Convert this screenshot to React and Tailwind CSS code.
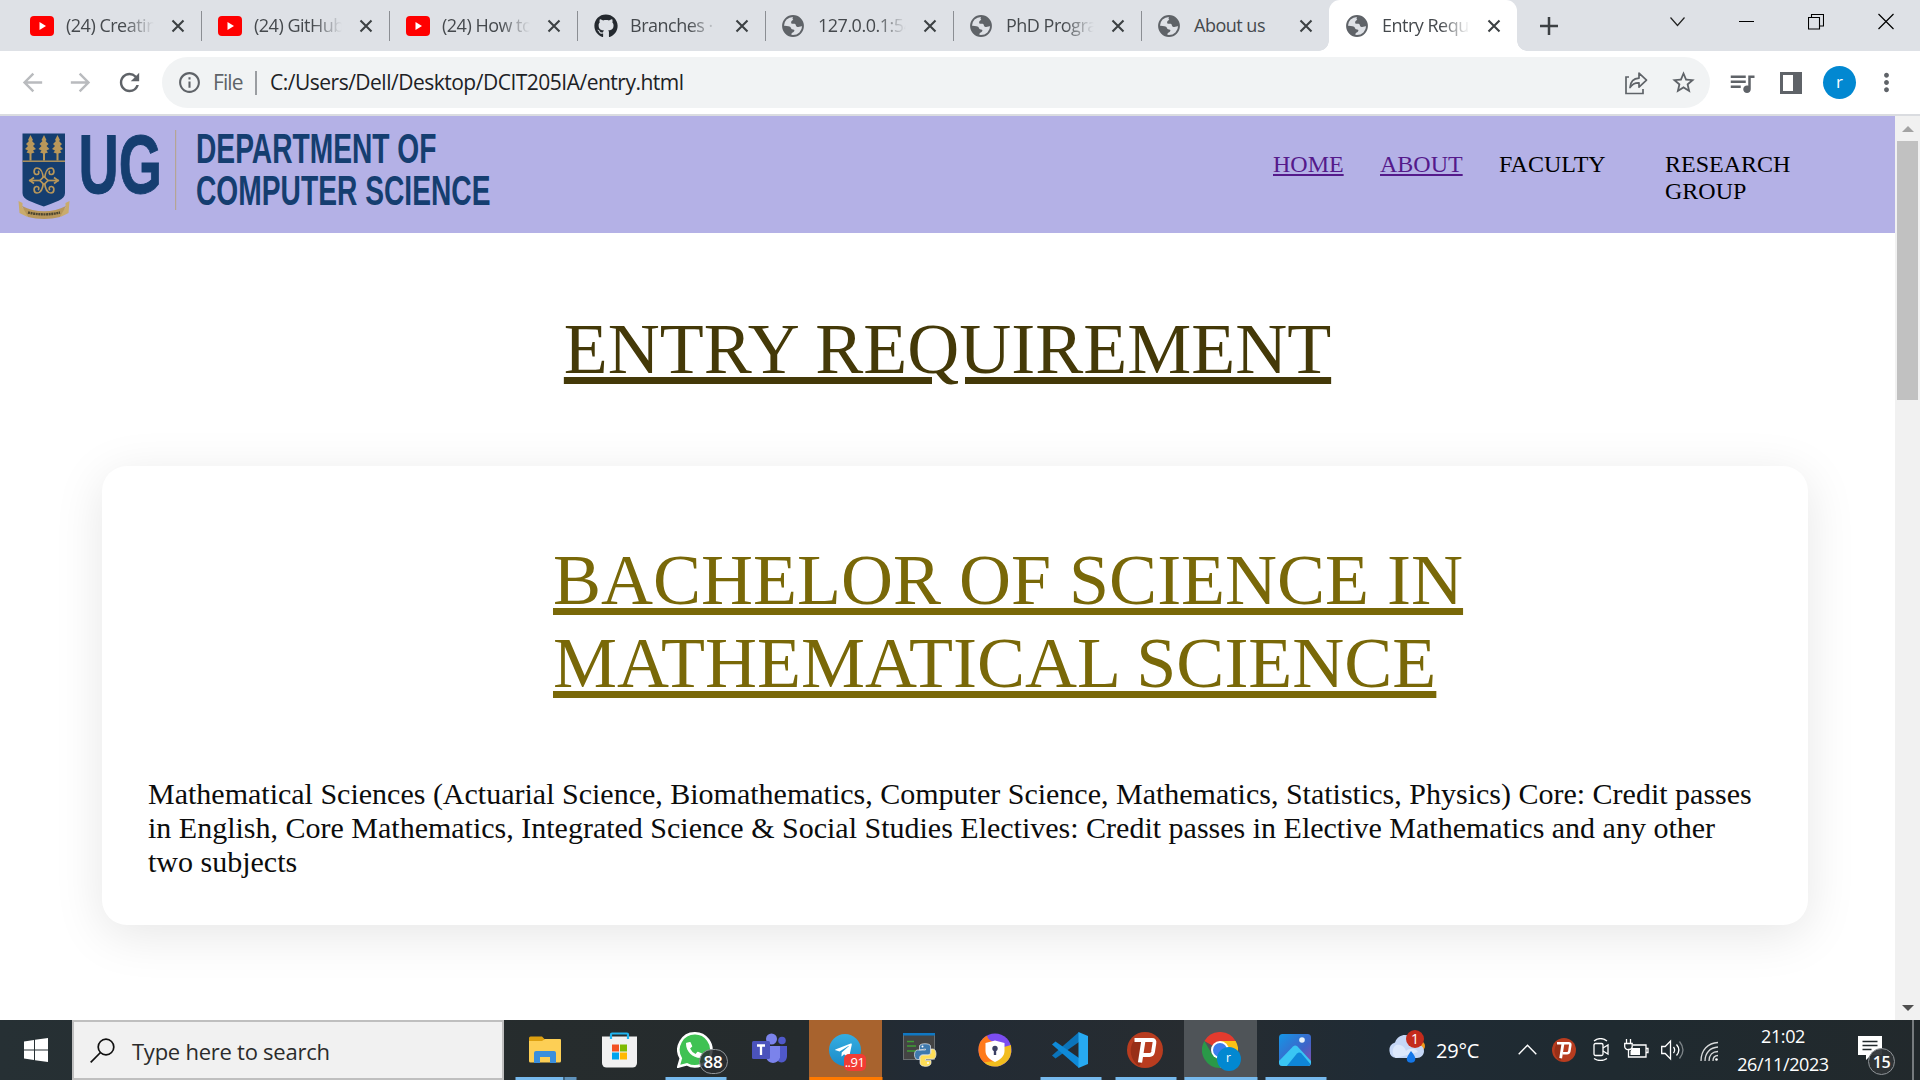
import React from "react";
import { FaGithub, FaPhoneAlt, FaTelegramPlane } from "react-icons/fa";
import {
  MdArrowBack,
  MdArrowForward,
  MdInfoOutline,
  MdMoreVert,
  MdQueueMusic,
  MdRefresh,
  MdStarBorder,
} from "react-icons/md";

const YouTubeIcon = () => (
  <svg width="24" height="20" viewBox="0 0 24 20">
    <rect width="24" height="20" rx="4" fill="#f00" />
    <path d="M9.5 6v8l6.500-4z" fill="#fff" />
  </svg>
);

const GlobeIcon = () => (
  <svg width="22" height="26" viewBox="0 0 22 22">
    <circle cx="11" cy="11" r="10" fill="#dee1e6" stroke="#5f6368" strokeWidth="1.8" />
    <path
      d="M11.5 1.2c-1.5 1.6-1 3-.2 3.6-1.8.8-2.6 2-2 3.6 1.2.7 2.6.3 3.8.5 1 .6.6 2.2 1.8 2.8 1.9.7 4-.6 6-.7A10 10 0 0 0 11.5 1.2z"
      fill="#5f6368"
    />
    <path
      d="M1 10.5c2.3.4 5.200.2 7.100 1.300 1.200.8.700 2.100 1.900 2.500 1.600.4 2.800.3 2.300 1.600-.8 1.500-2.500 1.400-2.900 3.100-.1.800-.1 1.500 0 2.200A10 10 0 0 1 1 10.500z"
      fill="#5f6368"
    />
  </svg>
);

const CloseX = () => (
  <svg width="14" height="14" viewBox="0 0 14 14" className="shrink-0">
    <path d="M1.500 1.500l11 11M12.500 1.500l-11 11" stroke="#3c4043" strokeWidth="2.100" />
  </svg>
);

const tabs = [
  { title: "(24) Creatin", icon: "yt" },
  { title: "(24) GitHub", icon: "yt" },
  { title: "(24) How to", icon: "yt" },
  { title: "Branches ·", icon: "gh" },
  { title: "127.0.0.1:54", icon: "globe" },
  { title: "PhD Progra", icon: "globe" },
  { title: "About us", icon: "globe", whole: true },
  { title: "Entry Requ", icon: "globe", active: true },
];

function Tab({ tab, last }) {
  return (
    <div
      className={
        "relative flex h-[51px] w-[188px] shrink-0 items-center pl-[17px] " +
        (tab.active ? "rounded-t-[11px] bg-white" : "")
      }
    >
      <span className="flex w-[24px] shrink-0 justify-start">
        {tab.icon === "yt" && <YouTubeIcon />}
        {tab.icon === "gh" && <FaGithub size={24} color="#24292f" />}
        {tab.icon === "globe" && <GlobeIcon />}
      </span>
      <span
        className={
          "-mt-[1px] ml-[12px] w-[88px] shrink-0 text-[18px] leading-[24px] tracking-[-0.500px] whitespace-nowrap text-[#45494d] " +
          (tab.whole ? "" : "[mask-image:linear-gradient(to_right,black_66%,transparent_100%)]")
        }
      >
        {tab.title}
      </span>
      <span className="ml-[17px] flex">
        <CloseX />
      </span>
      {!last && !tab.active && (
        <span className="absolute top-[11px] -right-[1px] h-[30px] w-[1.500px] bg-[#8b8e93]" />
      )}
      {tab.active && (
        <>
          <span className="absolute bottom-0 -left-[10px] size-[10px] bg-[radial-gradient(circle_at_0_0,#dee1e6_9.500px,#fff_10px)]" />
          <span className="absolute -right-[10px] bottom-0 size-[10px] bg-[radial-gradient(circle_at_100%_0,#dee1e6_9.500px,#fff_10px)]" />
        </>
      )}
    </div>
  );
}

function TabStrip() {
  return (
    <div className="flex h-[51px] bg-[#dee1e6] pl-[13px]">
      {tabs.map((t, i) => (
        <Tab key={t.title} tab={t} last={i === 6} />
      ))}
      <svg width="18" height="18" viewBox="0 0 18 18" className="mt-[17px] ml-[23px]">
        <path d="M9 0v18M0 9h18" stroke="#3c4043" strokeWidth="2.500" />
      </svg>
      <div className="mt-[13px] mr-[26px] ml-auto flex gap-[54px]">
        <svg width="15" height="17" viewBox="0 0 15 17">
          <path d="M.5 4.500l7 8 7-8" fill="none" stroke="#222" strokeWidth="1.200" />
        </svg>
        <svg width="15" height="17" viewBox="0 0 15 17">
          <path d="M0 8.500h15" stroke="#000" />
        </svg>
        <svg width="16" height="17" viewBox="0 0 16 17">
          <path d="M.5 4.500h11v11.500H.5zM3.500 4.500v-3h12v11.500h-4" fill="none" stroke="#000" strokeWidth="1.100" />
        </svg>
        <svg width="16" height="17" viewBox="0 0 16 17">
          <path d="M.5 1l15 15M15.500 1l-15 15" stroke="#000" strokeWidth="1.200" />
        </svg>
      </div>
    </div>
  );
}

function Toolbar() {
  return (
    <div className="flex h-[65px] items-center border-b-2 border-[#dadce0] bg-white">
      <MdArrowBack size={29} color="#b9bbbe" className="ml-[18px]" />
      <MdArrowForward size={29} color="#b9bbbe" className="ml-[19px]" />
      <MdRefresh size={29} color="#5f6368" className="ml-[20px]" />
      <div className="ml-[18px] flex h-[51px] w-[1548px] items-center rounded-full bg-[#f1f3f4] pl-[15px] text-[21px]">
        <MdInfoOutline size={25} color="#5f6368" />
        <span className="ml-[11px] w-[32px] tracking-[-0.900px] text-[#5f6368]">File</span>
        <span className="ml-[10px] h-[24px] w-[2px] bg-[#9a9da1]" />
        <span className="ml-[13px] tracking-[-0.500px] whitespace-nowrap text-[#202124]">
          C:/Users/Dell/Desktop/DCIT205IA/entry.html
        </span>
        <svg width="23" height="25" viewBox="0 0 23 25" className="ml-auto">
          <path d="M4 7H1v16.500h17V19" fill="none" stroke="#5f6368" strokeWidth="1.700" />
          <path
            d="M5 17.500c.5-6 4-9 9-9.300V3.200l7.500 7-7.500 7v-4.400c-4-.2-6.800 1.200-9 4.700z"
            fill="none"
            stroke="#5f6368"
            strokeWidth="1.700"
            strokeLinejoin="round"
          />
        </svg>
        <MdStarBorder size={27} color="#5f6368" className="mr-[13px] ml-[22px]" />
      </div>
      <MdQueueMusic size={30} color="#5f6368" className="ml-[17px]" />
      <svg width="22" height="22" viewBox="0 0 22 22" className="ml-[23px]">
        <path d="M0 0h22v22H0zM3 3v16h10V3z" fill="#5f6368" fillRule="evenodd" />
      </svg>
      <span className="ml-[21px] flex size-[33px] items-center justify-center rounded-full bg-[#0288d1] pb-[2px] text-[17px] text-white">
        r
      </span>
      <MdMoreVert size={29} color="#5f6368" className="ml-[16px]" />
    </div>
  );
}

function Logo() {
  return (
    <svg width="500" height="117" viewBox="0 116 500 117" className="shrink-0" fontFamily="Liberation Sans, Arial, sans-serif" fontWeight="bold">
      <path d="M22.500 133.500H65V193c0 7-10 9-21.200 13.500C32.500 202 22.500 200 22.500 193z" fill="#153e70" />
      <g fill="#b8975a">
        {[30.500, 44, 57.500].map((x) => (
          <path
            key={x}
            d={`M${x} 135l2.500 5-1 1 3 3-2 2 3 3-3 1.500 1.500 2-3 1v7h-2v-7l-3-1 1.500-2-3-1.500 3-3-2-2 3-3-1-1z`}
          />
        ))}
        <rect x="22.500" y="160.500" width="42.500" height="1.400" />
      </g>
      <g fill="none" stroke="#b8975a" strokeWidth="1.700">
        <path d="M29 180.500h30" />
        <path d="M43.500 180c-.5-8-3-12-6.500-12s-4 6-.5 6.500c2.500.2 3-2.500 1.500-3.500M44.500 180c.5-8 3-12 6.500-12s4 6 .5 6.500c-2.500.2-3-2.500-1.500-3.500M43.500 181c-.5 8-3 12-6.500 12s-4-6-.5-6.500c2.500-.2 3 2.500 1.500 3.500M44.500 181c.5 8 3 12 6.500 12s4-6 .5-6.500c-2.500-.2-3 2.500-1.500 3.500" />
        <path d="M34 177.500l-4 3 4 3M54 177.500l4 3-4 3" />
        <path d="M44 176.500l4 4-4 4-4-4z" fill="#153e70" />
      </g>
      <path d="M18.500 201l4 2v5l5 3v6l-8-4zM69.500 201l-4 2v5l-5 3v6l8-4z" fill="#c9ab6c" />
      <path d="M22 206c13 7 31 7 44 0l-6 11c-10 2.500-22 2.500-32 0z" fill="#b8975a" />
      <path d="M28 212.500c11 2.500 21 2.500 32 0" fill="none" stroke="#4d4630" strokeWidth="2.400" strokeDasharray="2 .6" />
      <text x="78.500" y="192.500" fontSize="84" textLength="83.500" lengthAdjust="spacingAndGlyphs" fill="#153e70" stroke="#153e70" strokeWidth="1">UG</text>
      <rect x="175" y="130" width="1.200" height="80" fill="#b5a594" />
      <text x="196" y="163" fontSize="42" textLength="240.500" lengthAdjust="spacingAndGlyphs" fill="#153e70">DEPARTMENT OF</text>
      <text x="196" y="205" fontSize="42" textLength="294.500" lengthAdjust="spacingAndGlyphs" fill="#153e70">COMPUTER SCIENCE</text>
    </svg>
  );
}

function Page() {
  return (
    <div className="flex h-[904px] font-['Liberation_Serif','Times_New_Roman',serif]">
      <div className="w-[1895px] overflow-hidden bg-white">
        <header className="flex h-[117px] bg-[#b4b1e6] text-[24px] leading-[27px] text-black">
          <Logo />
          <nav className="mt-[35px] ml-[773px] flex">
            <a className="w-[107px] text-[#551a8b] underline decoration-2 underline-offset-[2px]">HOME</a>
            <a className="w-[119px] text-[#551a8b] underline decoration-2 underline-offset-[2px]">ABOUT</a>
            <span className="w-[166px]">FACULTY</span>
            <span className="w-[130px]">RESEARCH GROUP</span>
          </nav>
        </header>
        <h1 className="mt-[75px] text-center text-[72px] leading-[83px] text-[#443908] underline decoration-[7px] underline-offset-[4px]">
          ENTRY REQUIREMENT
        </h1>
        <section className="mt-[75px] ml-[102px] h-[459px] w-[1706px] rounded-[25px] bg-white px-[46px] shadow-[0_10px_50px_rgba(0,0,0,0.100)]">
          <h2 className="ml-[405px] w-[960px] pt-[73px] text-[72px] leading-[83px] text-[#796808] underline decoration-[7px] underline-offset-[4px]">
            BACHELOR OF SCIENCE IN MATHEMATICAL SCIENCE
          </h2>
          <p className="mt-[72px] w-[1615px] text-[30px] leading-[34px] text-[#0c0c0c]">
            Mathematical Sciences (Actuarial Science, Biomathematics, Computer Science, Mathematics, Statistics,
            Physics) Core: Credit passes in English, Core Mathematics, Integrated Science &amp; Social Studies
            Electives: Credit passes in Elective Mathematics and any other two subjects
          </p>
        </section>
      </div>
      <div className="flex w-[25px] flex-col items-center bg-[#f1f1f1]">
        <svg width="12" height="25" viewBox="0 0 12 25">
          <path d="M0 16L6 10l6 6z" fill="#a3a3a3" />
        </svg>
        <div className="h-[259px] w-[21px] bg-[#c1c1c1]" />
        <svg width="12" height="25" viewBox="0 0 12 25" className="mt-auto">
          <path d="M0 10l6 6 6-6z" fill="#505050" />
        </svg>
      </div>
    </div>
  );
}

const Explorer = () => (
  <svg width="32" height="28" viewBox="0 0 32 28">
    <path d="M0 2a1.500 1.500 0 0 1 1.500-1.500H13L16 3.500V8H0z" fill="#dda010" />
    <path d="M0 5h13l3-2h15a1 1 0 0 1 1 1v21a1.500 1.500 0 0 1-1.500 1.500h-29A1.500 1.500 0 0 1 0 25z" fill="#fdcf55" />
    <path d="M5 27V17a2 2 0 0 1 2-2h18a2 2 0 0 1 2 2v10h-6v-6H11v6z" fill="#3b8fdc" />
  </svg>
);

const Store = () => (
  <svg width="35" height="36" viewBox="0 0 35 36">
    <path d="M0 4.500h35V31a4.500 4.500 0 0 1-4.500 4.500h-26A4.500 4.500 0 0 1 0 31z" fill="#f1f1f1" />
    <path d="M9 7V2.500a1 1 0 0 1 1-1h15a1 1 0 0 1 1 1V7" fill="none" stroke="#20b4ef" strokeWidth="2.200" />
    <path d="M10 12.500h7v7h-7z" fill="#f25022" />
    <path d="M18 12.500h7v7h-7z" fill="#7fba00" />
    <path d="M10 20.500h7v7h-7z" fill="#00a4ef" />
    <path d="M18 20.500h7v7h-7z" fill="#ffb900" />
  </svg>
);

const WhatsApp = () => (
  <span className="relative flex">
    <svg width="36" height="36" viewBox="0 0 36 36">
      <path d="M18.200 1.300a16.500 16.500 0 1 1-8.200 31L1.400 34.600l2.400-8.300A16.500 16.500 0 0 1 18.200 1.300z" fill="#3fc253" stroke="#fff" strokeWidth="2.600" />
    </svg>
    <FaPhoneAlt size={16} color="#fff" className="absolute top-[10px] left-[9px]" />
    <span className="absolute top-[17px] left-[22px] flex h-[25px] w-[29px] items-center justify-center rounded-full border border-[#8f9498] bg-[#2a2e31]/85 text-[17px] leading-none font-semibold tracking-[-0.300px] text-white">
      88
    </span>
  </span>
);

const Teams = () => (
  <svg width="36" height="34" viewBox="0 0 36 34">
    <circle cx="19.500" cy="6" r="5.500" fill="#7b83eb" />
    <circle cx="30" cy="7.500" r="3.800" fill="#5059c9" />
    <path d="M24 13h11v9.500c0 4-2 7-5.500 7S24 26 24 23z" fill="#5059c9" />
    <path d="M14 13h14v11.500a7.500 8.500 0 0 1-14 0z" fill="#7b83eb" />
    <rect y="8" width="18" height="18" rx="1.500" fill="#4b53bc" />
    <path d="M5 12.500h8M9 12.500v9.500" stroke="#fff" strokeWidth="2.300" />
  </svg>
);

const Telegram = () => (
  <span className="relative flex size-[32px] items-center justify-center rounded-full bg-gradient-to-b from-[#35aee2] to-[#1b8bc8]">
    <FaTelegramPlane size={19} color="#fff" className="mr-[3px]" />
    <span className="absolute top-[20px] left-[15px] flex h-[17px] w-[22px] items-center justify-center rounded-[5px] bg-[#f23c34] text-[13px] leading-none tracking-[-0.500px] text-white">
      ..91
    </span>
  </span>
);

const Python = () => (
  <svg width="34" height="34" viewBox="0 0 34 34">
    <rect width="32" height="27" fill="#6a6f72" />
    <rect x="1" y="2" width="30" height="24" fill="#444" />
    <rect width="32" height="2.500" fill="#0f78c4" />
    <path d="M4 8.500h7M4 13h9M4 18h9" stroke="#3f9c35" strokeWidth="1.300" />
    <g stroke="#e9edf0" strokeWidth=".7">
      <path d="M16.500 17v-4c0-3 11-3 11 0v6c0 2-1 3-3 3h-5c-2 0-3 1-3 3v1.500h-2c-4 0-4-9.500 0-9.500h8v-1z" fill="#3f79ad" />
      <path d="M28 16h2c4 0 4 10 0 10h-7.500v1.500H28V30c0 4.500-11 4.500-11 0v-4.500c0-2 1-3.500 3-3.500h5c2 0 3-1 3-3z" fill="#ffde57" />
    </g>
    <circle cx="19.500" cy="13.500" r="1" fill="#fff" />
    <circle cx="25" cy="30" r="1" fill="#fff" />
  </svg>
);

const SecureBrowser = () => (
  <svg width="34" height="34" viewBox="0 0 34 34">
    <circle cx="17" cy="17" r="16.500" fill="#7c4df0" />
    <path d="M9 2.500A16.500 16.500 0 0 0 10 32l7-3 1-20C14 9 10 7 9 2.500z" fill="#ff7a1a" />
    <path d="M6 29.300A16.500 16.500 0 0 0 33.300 19L33 12l-7 2-9 14z" fill="#f2bd1d" />
    <path d="M7.500 10L17 7.500l9.500 2.500v8c0 5-4 8.500-9.500 11-5.500-2.500-9.500-6-9.500-11z" fill="#fff" />
    <circle cx="17" cy="15.500" r="2.700" fill="#3a3f63" />
    <path d="M15.800 16h2.400v6h-2.400z" fill="#3a3f63" />
  </svg>
);

const VsCode = () => (
  <svg width="36" height="36" viewBox="0 0 36 36">
    <path d="M0 23.500l3.500 3L27 10V0z" fill="#0b74ba" />
    <path d="M0 12.500l3.500-3L27 26v10z" fill="#0f8ad8" />
    <path d="M26.500 0L36 4v28l-9.500 4z" fill="#27a9f1" />
  </svg>
);

const PIcon = ({ size = 36 }) => (
  <svg width={size} height={size} viewBox="0 0 36 36">
    <circle cx="18" cy="18" r="18" fill="#b83c1f" />
    <path d="M15 30V9L7 8.500A18 18 0 0 0 12 34z" fill="#982f17" />
    <path d="M7.500 8H25c2 0 2.800 1 2.400 3l-1.400 9c-.4 2-1.400 3-3.400 3H16" fill="none" stroke="#fff" strokeWidth="3.800" />
    <path d="M16.500 8l-3.500 22.500" stroke="#fff" strokeWidth="4.200" />
  </svg>
);

const Chrome = () => (
  <span className="relative flex">
    <svg width="36" height="36" viewBox="0 0 36 36">
      <path d="M18 18L2.400 9A18 18 0 0 1 33.600 9z" fill="#e33b2e" />
      <path d="M18 9h15.600A18 18 0 0 1 18 36l8-14z" fill="#fbc116" />
      <path d="M2.400 9A18 18 0 0 0 18 36l8-13.500-15.800 0z" fill="#2a9948" />
      <circle cx="18" cy="18" r="9" fill="#fff" />
      <circle cx="18" cy="18" r="7" fill="#3b7ded" />
    </svg>
    <span className="absolute top-[15px] left-[15px] flex size-[24px] items-center justify-center rounded-full bg-[#0288d1] pb-[2px] text-[12px] text-white">
      r
    </span>
  </span>
);

const Photos = () => (
  <svg width="32" height="32" viewBox="0 0 32 32">
    <defs>
      <linearGradient id="ph" x1="0" y1="0" x2="1" y2="1">
        <stop offset="0" stopColor="#1496e6" />
        <stop offset=".6" stopColor="#3f64c8" />
        <stop offset="1" stopColor="#8a4cae" />
      </linearGradient>
      <clipPath id="pc"><rect width="32" height="32" rx="3.500" /></clipPath>
    </defs>
    <g clipPath="url(#pc)">
      <rect width="32" height="32" fill="url(#ph)" />
      <path d="M0 27l14-14.500c1.500-1.400 3-1.400 4.500 0L32 27v6H0z" fill="#3ac6f4" />
      <path d="M7 33l11-13.500c1.500-1.500 3-1.500 4.500 0L34 33z" fill="#0f86d8" />
    </g>
    <circle cx="23" cy="6" r="2.800" fill="#e8f2fb" />
  </svg>
);

const apps = [
  { id: "explorer", Icon: Explorer, bar: "group" },
  { id: "store", Icon: Store },
  { id: "whatsapp", Icon: WhatsApp, bar: "short" },
  { id: "teams", Icon: Teams },
  { id: "telegram", Icon: Telegram, cell: "bg-[#a8632e]", bar: "orange" },
  { id: "python", Icon: Python },
  { id: "browser", Icon: SecureBrowser },
  { id: "code", Icon: VsCode, bar: "short" },
  { id: "p", Icon: PIcon, bar: "short" },
  { id: "chrome", Icon: Chrome, cell: "bg-[#4f5458]", bar: "full" },
  { id: "photos", Icon: Photos, bar: "short" },
];

const bars = {
  group: "w-[61px] bg-[linear-gradient(to_right,#76b9ed_47px,#41647f_47px,#41647f_49px,#5f92bb_49px)]",
  short: "w-[61px] bg-[#76b9ed]",
  full: "w-[73px] bg-[#76b9ed]",
  orange: "w-[73px] bg-[#ff7a00]",
};

function Tray() {
  return (
    <div className="ml-[56px] flex h-[60px] items-center text-white">
      <span className="relative mt-[2px] flex">
        <svg width="38" height="34" viewBox="0 0 38 34">
          <circle cx="32" cy="12" r="5" fill="#f29a1c" />
          <path d="M8 24a8 8 0 0 1-1-15.500C9 3 13 1 17 1c6 0 10 4 10.500 9 5 0 8.500 3 8.500 7s-3 7-7 7z" fill="#c5d7f6" />
          <path d="M8 24a8 8 0 0 1 0-13c5-1 9 2 10 6 3-3 10-3 12 1" fill="#dce8fb" />
          <path d="M23 17c4 5 5 7 4 9.500-1 3-7 3-8 0-.8-2.500 1-5 4-9.500z" fill="#1477e8" />
        </svg>
        <span className="absolute -top-[4px] left-[18px] flex size-[18px] items-center justify-center rounded-full bg-[#c42b1c] text-[14px] leading-none">
          1
        </span>
      </span>
      <span className="mt-[2px] ml-[10px] w-[45px] text-[20px] tracking-[-0.200px] whitespace-nowrap">29°C</span>
      <svg width="19" height="11" viewBox="0 0 19 11" className="-mt-[2px] ml-[37px]">
        <path d="M.7 10.300L9.500 1.200l8.800 9.100" fill="none" stroke="#fff" strokeWidth="1.400" />
      </svg>
      <span className="-mt-[1px] ml-[15px]"><PIcon size={24} /></span>
      <svg width="16" height="23" viewBox="0 0 16 23" className="-mt-[1px] ml-[17px]" fill="none" stroke="#fff" strokeWidth="1.300">
        <rect x="1" y="5.500" width="9" height="12" rx="1.500" />
        <path d="M10 10l5-3v9l-5-3M1 3c4-3 9-3 13 0M1 20.500c4 2.500 9 2.500 13 0" />
      </svg>
      <svg width="25" height="20" viewBox="0 -1 25 20" className="-mt-[2px] ml-[15px]" fill="none" stroke="#fff" strokeWidth="1.300">
        <path d="M2.500-1v4M6.500-1v4M.7 3.500h7.500v3a3 3 0 0 1-3 3h-1a3 3 0 0 1-3.500-3zM4.500 9.500V17H22V5H9M22.500 8.500H24v4h-1.500" />
        <path d="M8 8h8v7H6.500v-3.500z" fill="#fff" stroke="none" />
      </svg>
      <svg width="23" height="22" viewBox="0 0 23 22" className="-mt-[1px] ml-[12px]" fill="none" stroke="#fff" strokeWidth="1.300">
        <path d="M.7 7.500h3.500L9.500 2v18L4.200 14.500H.7z" />
        <path d="M12.500 8c1.500 2 1.500 4 0 6M15.500 5.500c3 3.500 3 7.500 0 11" />
        <path d="M18.500 2.500c4.500 5.500 4.500 11.500 0 17" stroke="#7d8488" />
      </svg>
      <svg width="20" height="21" viewBox="0 0 20 21" className="mt-[2px] ml-[16px]" fill="none" stroke="#d8dadb" strokeWidth="1.300">
        <path d="M1 20C1 9 8 2 18 1.500M5 20C5 12 10 6.500 18 6M9 20c0-6 3.500-9.500 9-9.500M13 20c0-3.500 2-5.500 5-5.500" />
        <circle cx="16.500" cy="18.500" r="1.300" fill="#fff" stroke="none" />
      </svg>
      <div className="ml-[12px] flex w-[102px] flex-col items-center text-[18px] leading-[28px] tracking-[-0.400px]">
        <span>21:02</span>
        <span>26/11/2023</span>
      </div>
      <span className="relative ml-[24px] flex">
        <svg width="24" height="28" viewBox="0 0 24 28">
          <path d="M0 0h24v19h-11l-5 5v-5H0z" fill="#fff" />
          <path d="M4.500 5.500h15M4.500 9.500h15M4.500 13.500h9" stroke="#22292c" strokeWidth="1.300" />
        </svg>
        <span className="absolute top-[12px] left-[10px] flex size-[27px] items-center justify-center rounded-full border border-[#8f9498] bg-[#2f3437]/95 text-[16px] leading-none font-semibold tracking-[-0.500px]">
          15
        </span>
      </span>
      <span className="ml-[30px] h-[60px] w-[2px] bg-[#767b7e]" />
    </div>
  );
}

function Taskbar() {
  return (
    <div className="flex h-[60px] bg-[linear-gradient(to_right,#263034_0%,#262c2d_28%,#252b2d_42%,#222b35_48%,#272c30_62%,#1f2b35_72%,#1f2a30_84%,#22292c_100%)]">
      <div className="flex w-[72px] items-center justify-center">
        <svg width="24" height="24" viewBox="0 0 24 24" fill="#fff">
          <path d="M0 3.400L10 2v9.500H0zM11 1.800L24 0v11.500H11zM0 12.500h10V22L0 20.600zM11 12.500h13V24l-13-1.800z" />
        </svg>
      </div>
      <div className="flex w-[432px] items-center border-2 border-[#bfbfbf] bg-[#f1f1f1] pl-[16px]">
        <svg width="25" height="25" viewBox="0 0 25 25" fill="none" stroke="#111" strokeWidth="1.700">
          <circle cx="16" cy="9" r="7.800" />
          <path d="M10.500 14.500L.7 24.300" />
        </svg>
        <span className="ml-[17px] pt-[2px] text-[22px] tracking-[-0.250px] whitespace-nowrap text-[#2b2b2b]">Type here to search</span>
      </div>
      <div className="ml-[5px] flex gap-[2px]">
        {apps.map(({ id, Icon, cell = "", bar }) => (
          <div key={id} className={"relative flex w-[73px] items-center justify-center pr-[2px] " + cell}>
            <Icon />
            {bar && (
              <span className={"absolute bottom-0 left-1/2 h-[3px] -translate-x-1/2 " + bars[bar]} />
            )}
          </div>
        ))}
      </div>
      <Tray />
    </div>
  );
}

export default function App() {
  return (
    <div className="h-[1080px] w-[1920px] overflow-hidden bg-white font-['Open_Sans','Noto_Sans',sans-serif]">
      <TabStrip />
      <Toolbar />
      <Page />
      <Taskbar />
    </div>
  );
}
